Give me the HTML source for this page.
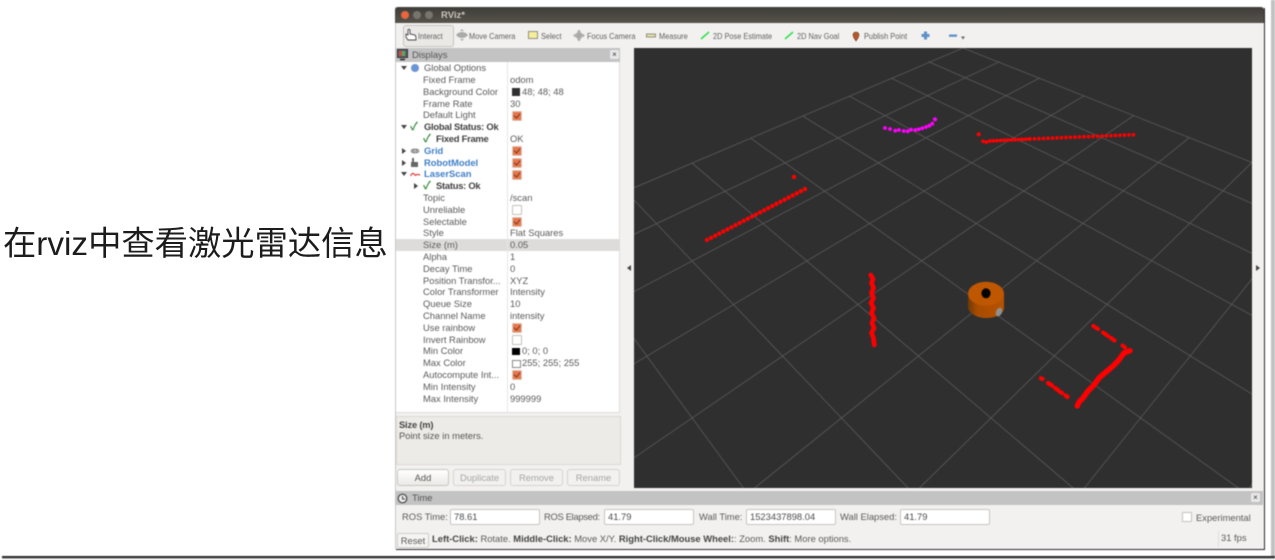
<!DOCTYPE html>
<html lang="zh"><head><meta charset="utf-8"><title>RViz</title>
<style>
html,body{margin:0;padding:0;background:#fff;width:1275px;height:560px;overflow:hidden}
body{position:relative;font-family:"Liberation Sans","Noto Sans CJK SC",sans-serif}
.a{position:absolute}
#clip{position:absolute;left:0;top:0;width:1275px;height:560px;overflow:hidden}
#win{position:absolute;left:0;top:0;width:1275px;height:560px;filter:blur(.45px);font-size:9.4px;color:#5a5a5a}
.t{position:absolute;line-height:12px;height:12px;white-space:nowrap}
.k{left:423px}.v{left:510px}
.b{font-weight:bold;color:#3f3f3f;letter-spacing:-.25px}
.bl{font-weight:bold;color:#3f7fc8}
.cb{position:absolute;left:512px;width:8px;height:8px;background:#e9764a;border:1px solid #d8c8bc;border-radius:1px}
.cb:after{content:"";position:absolute;left:2px;top:0;width:3px;height:5px;border:solid #7a3a20;border-width:0 1.2px 1.2px 0;transform:rotate(40deg)}
.ub{position:absolute;left:512px;width:8px;height:8px;background:#fff;border:1px solid #c4c0ba;border-radius:1px}
.btn{position:absolute;top:469px;height:15px;line-height:15px;text-align:center;border:1px solid #d6d3ce;border-radius:3px;background:#f2f1f0;color:#a5a5a5}
.inp{position:absolute;top:509px;height:14px;line-height:14px;width:85px;padding-left:3px;background:#fff;border:1px solid #c8c5c0;border-radius:2px;color:#4a4a4a}
.tb{position:absolute;top:29px;line-height:14px;white-space:nowrap;font-size:8.6px;color:#5f5f5f;transform:scaleX(.86);transform-origin:0 50%}
.tri{position:absolute;width:0;height:0}
.dn{border-left:3px solid transparent;border-right:3px solid transparent;border-top:4px solid #444}
.rt{border-top:3px solid transparent;border-bottom:3px solid transparent;border-left:4px solid #444}
.cx{position:absolute;color:#2f8a34;font-size:11px;line-height:12px;font-weight:bold}
</style></head><body>
<div id="clip">
<div class="a" style="left:3px;top:224px;font-size:33.3px;line-height:42px;color:#1c1c1c;white-space:nowrap;font-family:'Liberation Sans','Noto Sans CJK SC',sans-serif">在rviz中查看激光雷达信息</div>

<div id="win">
<!-- outer edges -->
<div class="a" style="left:2px;top:555.5px;width:1273px;height:2px;background:#2a2a2a"></div>
<div class="a" style="left:2px;top:557.5px;width:1273px;height:1.5px;background:#b5b5b5"></div>
<div class="a" style="left:1271px;top:0;width:4px;height:556px;background:#c2c2c2"></div>
<!-- window -->
<div class="a" style="left:395px;top:7px;width:869px;height:542px;background:#f2f1f0;box-shadow:1px 1px 0 #2d2430,inset 1px 0 0 #c8c8c8"></div>
<div class="a" style="left:395px;top:7px;width:869px;height:16px;background:linear-gradient(#3f3d39,#56534c);border-radius:3px 3px 0 0"></div>
<div class="a" style="left:401px;top:11px;width:8px;height:8px;border-radius:50%;background:#e8663c"></div>
<div class="a" style="left:413px;top:11px;width:8px;height:8px;border-radius:50%;background:#77746d"></div>
<div class="a" style="left:425px;top:11px;width:8px;height:8px;border-radius:50%;background:#77746d"></div>
<div class="a" style="left:441px;top:10px;line-height:12px;font-weight:bold;color:#c9c5bc;font-size:9.5px">RViz*</div>

<!-- toolbar -->
<div class="a" style="left:403px;top:25px;width:49px;height:20px;border:1px solid #c6c4c0;border-radius:3px;background:#ebe9e6"></div>
<svg class="a" style="left:396px;top:24px" width="580" height="22" viewBox="396 24 580 22">
<path d="M406 37v-3l2 1v-5q1-1.500 2 0v4l5 1q1 1 1 5h-8z" fill="#fff" stroke="#444" stroke-width=".9"/>
<g fill="#aaa"><ellipse cx="462" cy="35" rx="5" ry="3"/><path d="M462 29l2 2h-4zM462 41l2-2h-4zM456 35l2-2v4zM468 35l-2-2v4z"/></g>
<rect x="528.500" y="31.500" width="9" height="7" fill="#f5ee9a" stroke="#777" stroke-width=".8"/>
<g fill="#aaa"><circle cx="579" cy="35.500" r="3.500"/><path d="M579 29.500l2 2.500h-4zM579 41.500l2-2.500h-4zM573 35.500l2.500-2v4zM585 35.500l-2.500-2v4z"/></g>
<rect x="646.500" y="34" width="9" height="3" fill="#e9e2a0" stroke="#777" stroke-width=".8"/>
<path d="M701 39l8-7M785 39l8-7" stroke="#2ee04a" stroke-width="1.500" fill="none"/>
<path d="M856 41q-3-4-3-6a3 3 0 0 1 6 0q0 2-3 6z" fill="#b8562a" stroke="#6b3a1c" stroke-width=".6"/>
<path d="M924 31.500h3v2.500h2.500v3h-2.500v2.500h-3v-2.500h-2.500v-3h2.500z" fill="#5f8fc8"/>
<rect x="949" y="34.500" width="8" height="2.300" fill="#5f8fc8"/>
<path d="M961 36.500h4l-2 3z" fill="#666"/>
</svg>
<div class="tb" style="left:418px">Interact</div>
<div class="tb" style="left:469px">Move Camera</div>
<div class="tb" style="left:541px">Select</div>
<div class="tb" style="left:587px">Focus Camera</div>
<div class="tb" style="left:659px">Measure</div>
<div class="tb" style="left:713px">2D Pose Estimate</div>
<div class="tb" style="left:797px">2D Nav Goal</div>
<div class="tb" style="left:864px">Publish Point</div>

<!-- displays panel -->
<div class="a" style="left:396px;top:48px;width:224px;height:14px;background:#c3c3c3"></div>
<svg class="a" style="left:397px;top:49px" width="13" height="12"><rect x=".5" y=".5" width="10" height="8" fill="#59606b" stroke="#333"/><rect x="2" y="2" width="3" height="5" fill="#d04a4a"/><rect x="5" y="2" width="3" height="5" fill="#57b05a"/><path d="M3 10.500h5" stroke="#222" stroke-width="1.500"/></svg>
<div class="t" style="left:412px;top:49px;color:#555">Displays</div>
<div class="a" style="left:610px;top:50px;width:9px;height:9px;background:#e8e8e8;border-radius:2px;text-align:center;line-height:9px;font-size:8px;color:#333">×</div>
<div class="a" style="left:396px;top:62px;width:224px;height:351px;background:#fff;box-shadow:inset -1px 0 0 #ddd,inset 0 -1px 0 #ddd"></div>
<div class="a" style="left:396px;top:239px;width:224px;height:12px;background:#dedcda"></div>
<div class="a" style="left:507px;top:62px;width:1px;height:351px;background:#e6e6e6"></div>

<div class="tri dn" style="left:401px;top:66px"></div>
<svg class="a" style="left:410px;top:63px" width="10" height="10"><circle cx="5" cy="5" r="4" fill="#6b94d6"/></svg>
<div class="t" style="left:424px;top:62.2px;color:#555">Global Options</div>
<div class="t k" style="top:74px">Fixed Frame</div><div class="t v" style="top:74px">odom</div>
<div class="t k" style="top:85.800px">Background Color</div><div class="a" style="left:512px;top:88px;width:7.500px;height:7.500px;background:#303030"></div><div class="t" style="left:522px;top:85.800px">48; 48; 48</div>
<div class="t k" style="top:97.600px">Frame Rate</div><div class="t v" style="top:97.600px">30</div>
<div class="t k" style="top:109.400px">Default Light</div><div class="cb" style="top:110.500px"></div>
<div class="tri dn" style="left:401px;top:125px"></div><div class="cx" style="left:410px;top:121px">✓</div>
<div class="t b" style="left:424px;top:121.200px">Global Status: Ok</div>
<div class="cx" style="left:423px;top:133px">✓</div>
<div class="t b" style="left:436px;top:133px">Fixed Frame</div><div class="t v" style="top:133px">OK</div>
<div class="tri rt" style="left:402px;top:148px"></div>
<svg class="a" style="left:410px;top:146px" width="10" height="10"><ellipse cx="5" cy="5" rx="4.500" ry="2.500" fill="#888"/><path d="M0 5h10M5 2v6" stroke="#ddd" stroke-width=".6"/></svg>
<div class="t bl" style="left:424px;top:144.800px">Grid</div><div class="cb" style="top:146px"></div>
<div class="tri rt" style="left:402px;top:160px"></div>
<svg class="a" style="left:410px;top:157px" width="10" height="11"><path d="M2 1h2v4h4v5H1V5h1z" fill="#666"/></svg>
<div class="t bl" style="left:424px;top:156.600px">RobotModel</div><div class="cb" style="top:157.800px"></div>
<div class="tri dn" style="left:401px;top:172px"></div>
<svg class="a" style="left:410px;top:170px" width="11" height="9"><path d="M.5 6q2-4 3.500-2t2 1 4 0" fill="none" stroke="#e53030" stroke-width="1.200"/></svg>
<div class="t bl" style="left:424px;top:168.400px">LaserScan</div><div class="cb" style="top:169.600px"></div>
<div class="tri rt" style="left:414px;top:183px"></div><div class="cx" style="left:423px;top:180px">✓</div>
<div class="t b" style="left:436px;top:180.200px">Status: Ok</div>
<div class="t k" style="top:192px">Topic</div><div class="t v" style="top:192px">/scan</div>
<div class="t k" style="top:203.800px">Unreliable</div><div class="ub" style="top:205px"></div>
<div class="t k" style="top:215.600px">Selectable</div><div class="cb" style="top:216.800px"></div>
<div class="t k" style="top:227.400px">Style</div><div class="t v" style="top:227.400px">Flat Squares</div>
<div class="t k" style="top:239.200px">Size (m)</div><div class="t v" style="top:239.200px">0.05</div>
<div class="t k" style="top:251px">Alpha</div><div class="t v" style="top:251px">1</div>
<div class="t k" style="top:262.800px">Decay Time</div><div class="t v" style="top:262.800px">0</div>
<div class="t k" style="top:274.600px">Position Transfor...</div><div class="t v" style="top:274.600px">XYZ</div>
<div class="t k" style="top:286.400px">Color Transformer</div><div class="t v" style="top:286.400px">Intensity</div>
<div class="t k" style="top:298.200px">Queue Size</div><div class="t v" style="top:298.200px">10</div>
<div class="t k" style="top:310px">Channel Name</div><div class="t v" style="top:310px">intensity</div>
<div class="t k" style="top:321.800px">Use rainbow</div><div class="cb" style="top:323px"></div>
<div class="t k" style="top:333.600px">Invert Rainbow</div><div class="ub" style="top:334.800px"></div>
<div class="t k" style="top:345.400px">Min Color</div><div class="a" style="left:512px;top:347.500px;width:7.500px;height:7.500px;background:#000"></div><div class="t" style="left:522px;top:345.400px">0; 0; 0</div>
<div class="t k" style="top:357.200px">Max Color</div><div class="a" style="left:512px;top:359.500px;width:6.500px;height:6.500px;background:#fff;border:1px solid #888"></div><div class="t" style="left:522px;top:357.200px">255; 255; 255</div>
<div class="t k" style="top:369px">Autocompute Int...</div><div class="cb" style="top:370.200px"></div>
<div class="t k" style="top:380.800px">Min Intensity</div><div class="t v" style="top:380.800px">0</div>
<div class="t k" style="top:392.600px">Max Intensity</div><div class="t v" style="top:392.600px">999999</div>

<!-- description -->
<div class="a" style="left:396px;top:416px;width:223px;height:47px;background:#edebe7;border:1px solid #dcd9d4"></div>
<div class="t" style="left:399px;top:419px;font-weight:bold;color:#444;letter-spacing:-.2px">Size (m)</div>
<div class="t" style="left:399px;top:429.500px;color:#555">Point size in meters.</div>
<div class="btn" style="left:397px;width:50px;background:linear-gradient(#fff,#ece9e6);border-color:#c8c5c0;color:#555">Add</div>
<div class="btn" style="left:453px;width:51px">Duplicate</div>
<div class="btn" style="left:510px;width:51px">Remove</div>
<div class="btn" style="left:567px;width:51px">Rename</div>

<!-- canvas -->
<svg class="a" style="left:634px;top:48px" width="618" height="440" viewBox="634 48 618 440">
<rect x="634" y="48" width="618" height="440" fill="#2f2f2f"/>
<path fill="none" stroke="#565656" stroke-width=".9" d="
M963 48L1252 162.500M928.600 61.700L1252 203.500M890.700 77.900L1252 253.400M848.900 95.900L1252 315.400M802.400 115.800L1252 394.100M750.500 138L1238.300 488M692 163L1073.100 488M634 200L908.100 488M634 338.500L743.400 488
M963 48L634 187.800M999.600 61.600L634 234.300M1040 77.800L634 291.600M1084.500 95.600L634 363.800M1134.100 115.400L634 457.800M1189.500 137.500L754.600 488M1251.900 162.500L919.400 488M1252 278.900L1084.300 488M1252 483.800L1249.600 488"/>
<!-- magenta -->
<g fill="#f0f">
<circle cx="885" cy="128" r="1.900"/><circle cx="890" cy="129" r="1.900"/><circle cx="895.300" cy="130.700" r="1.900"/><circle cx="899" cy="130" r="1.900"/><circle cx="903.700" cy="131" r="1.900"/><circle cx="907.700" cy="131.300" r="1.900"/><circle cx="911" cy="129.700" r="1.900"/><circle cx="915.300" cy="130" r="1.900"/><circle cx="918.700" cy="129.300" r="1.900"/><circle cx="922.300" cy="128.300" r="1.900"/><circle cx="926" cy="127" r="1.900"/><circle cx="929.300" cy="125.700" r="1.900"/><circle cx="932.300" cy="123.700" r="1.900"/><circle cx="935" cy="119.300" r="2.100"/>
</g>
<!-- red -->
<g fill="none" stroke="#f00" stroke-linecap="round">
<path d="M707 240L807 188" stroke-width="4.300" stroke-dasharray="0 4.600"/>
<path d="M983 141.300L986 142.300L989.700 141L1030 139" stroke-width="3.700" stroke-dasharray="0 3.600"/>
<path d="M1030 139L1134.500 134.700" stroke-width="3.700" stroke-dasharray="0 4.500"/>
<path d="M870.700 275L873 279L871.500 283L873.500 288L871.500 293L873.500 298L871 303L873.500 308L871.500 313L874 318L872 323L874 328L871.500 333L873.500 338L874.300 345" stroke-width="4.600"/>
<path d="M1093.300 326L1098 329M1103 332.500L1108 336M1111 338L1114.500 340.500M1122.500 345.500L1125 347.500" stroke-width="4"/>
<path d="M1130 350.700L1124 353L1118 361L1112 367L1106 372L1099 378L1094 385L1088 391L1083 398L1079 402L1077.300 406" stroke-width="5.400"/>
<path d="M1041 378.300L1042.500 379M1048 383L1052 385.500M1055 388L1058 390M1060 392L1062 393M1065.500 395.500L1067.500 397" stroke-width="4.300"/>
</g>
<circle cx="794" cy="177" r="2.200" fill="#f00"/><circle cx="978.700" cy="134.300" r="2.100" fill="#f00"/>
<!-- robot -->
<defs><linearGradient id="rb" x1="0" x2="1" y1="0" y2="0"><stop offset="0" stop-color="#6e3a08"/><stop offset=".25" stop-color="#a84c00"/><stop offset="1" stop-color="#b65200"/></linearGradient></defs>
<path d="M968 294v14q1 4 6 7 5 3 12 3 8 0 13-3 5-3 5-7v-14z" fill="url(#rb)"/>
<ellipse cx="986" cy="293.700" rx="18" ry="12" fill="#bf5701"/>
<ellipse cx="986" cy="293.300" rx="4.600" ry="5" fill="#050505"/>
<ellipse cx="999" cy="312" rx="3" ry="4.500" transform="rotate(25 999 312)" fill="#8f8f8f"/>
</svg>
<div class="tri" style="left:627px;top:265px;border-top:3px solid transparent;border-bottom:3px solid transparent;border-right:4px solid #444"></div>
<div class="tri rt" style="left:1256px;top:265px"></div>

<!-- time panel -->
<div class="a" style="left:395px;top:491px;width:868px;height:14px;background:#c3c3c3"></div>
<svg class="a" style="left:397px;top:493px" width="11" height="11"><circle cx="5.500" cy="5.500" r="4.300" fill="#eee" stroke="#444" stroke-width="1.200"/><path d="M5.500 3v3h2.500" stroke="#444" fill="none"/></svg>
<div class="t" style="left:412px;top:492px;color:#555">Time</div>
<div class="a" style="left:1251px;top:493px;width:9px;height:9px;background:#e8e8e8;border-radius:2px;text-align:center;line-height:9px;font-size:8px;color:#333">×</div>
<div class="t" style="left:402px;top:511px">ROS Time:</div><div class="inp" style="left:450px">78.61</div>
<div class="t" style="left:544px;top:511px;letter-spacing:-.3px">ROS Elapsed:</div><div class="inp" style="left:604px">41.79</div>
<div class="t" style="left:699px;top:511px">Wall Time:</div><div class="inp" style="left:746px">1523437898.04</div>
<div class="t" style="left:840px;top:511px">Wall Elapsed:</div><div class="inp" style="left:900px">41.79</div>
<div class="a" style="left:1182px;top:512px;width:8px;height:8px;background:#fff;border:1px solid #c4c0ba;border-radius:1px"></div>
<div class="t" style="left:1196px;top:511.500px">Experimental</div>

<!-- status -->
<div class="a" style="left:397px;top:533px;width:30px;height:13px;line-height:13px;text-align:center;border:1px solid #d0cdc8;border-radius:2px;background:#f5f4f2">Reset</div>
<div class="t" style="left:432px;top:533px"><b style="color:#444">Left-Click:</b> Rotate. <b style="color:#444">Middle-Click:</b> Move X/Y. <b style="color:#444">Right-Click/Mouse Wheel:</b>: Zoom. <b style="color:#444">Shift</b>: More options.</div>
<div class="a" style="left:1218px;top:531px;width:1px;height:16px;background:#e0ded9"></div>
<div class="t" style="left:1221px;top:532px">31 fps</div>
</div>
</div>
</body></html>
